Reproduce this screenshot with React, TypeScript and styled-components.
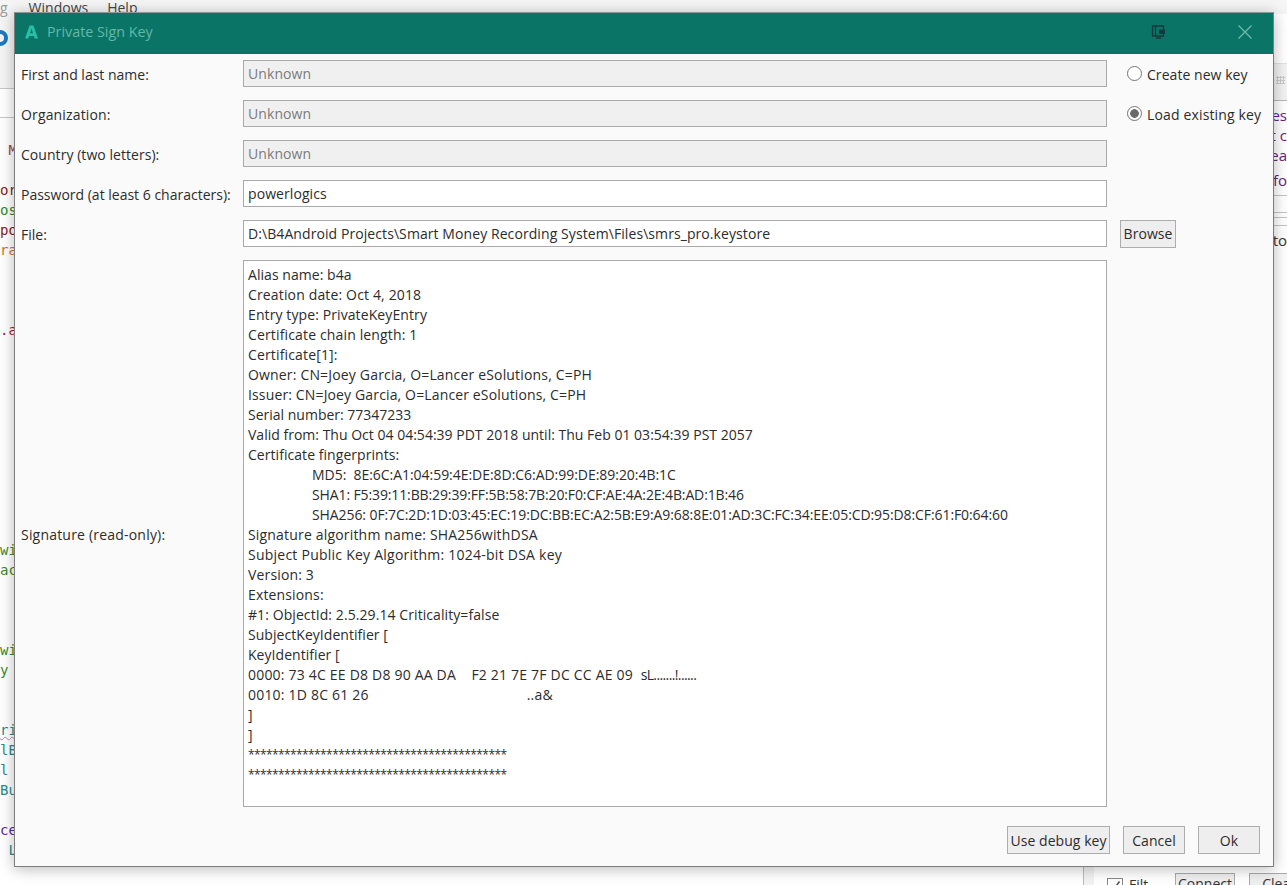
import React from "react";
import styled, { createGlobalStyle } from "styled-components";

const Global = createGlobalStyle`
  html, body { margin: 0; padding: 0; width: 1287px; height: 885px; overflow: hidden; background: #f4f4f4; }
  #root { width: 1287px; height: 885px; position: relative; overflow: hidden; }
  * { box-sizing: border-box; }
`;

const UI = `"Open Sans", "Noto Sans", "Liberation Sans", sans-serif`;
const MONO = `"DejaVu Sans Mono", "Liberation Mono", monospace`;

/* ---------- the application behind the dialog ---------- */
const Backdrop = styled.div`
  width: 1287px;
  height: 885px;
  display: grid;
  grid-template-rows: 14px 74px 30px 1fr;
  grid-template-columns: 1083px 204px;
  background: #f5f5f5;
`;
const MenuBar = styled.div`
  grid-column: 1 / 3;
  display: flex;
  align-items: center;
  gap: 19px;
  font: 14px ${UI};
  height: 14px;
`;
const MenuItem = styled.span<{ $muted?: boolean }>`
  color: ${(p) => (p.$muted ? "#999" : "#444")};
  margin-right: ${(p) => (p.$muted ? "2px" : "0")};
`;
const Toolbar = styled.div`
  grid-column: 1 / 2;
  padding-top: 16px;
`;
const ToolCircle = styled.div`
  width: 16px;
  height: 16px;
  margin-left: -8px;
  border: 4px solid #1a78c2;
  border-radius: 50%;
`;
const TabStrip = styled.div`
  grid-column: 1 / 2;
  grid-row: 3;
  background: #fff;
  border-top: 1px solid #c8c8c8;
  border-bottom: 1px solid #c8c8c8;
`;
const Code = styled.div`
  grid-column: 1 / 2;
  grid-row: 4;
  background: #fff;
  padding-top: 22px;
  overflow: hidden;
`;
const CodeLine = styled.div<{ $c: string; $wavy?: boolean }>`
  height: 20px;
  font: 14px/20px ${MONO};
  white-space: pre;
  color: ${(p) => p.$c};
  ${(p) => (p.$wavy ? "text-decoration: underline wavy #c08ac0 1px;" : "")}
`;
const SidePanel = styled.div`
  grid-column: 2 / 3;
  grid-row: 2 / 5;
  border-left: 1px solid #bdbdbd;
  display: flex;
  flex-direction: column;
  padding-left: 11px;
  background: linear-gradient(to right, #f2f2f2 10px, #fff 10px);
  min-width: 0;
  min-height: 0;
  overflow: hidden;
`;
const SideTop = styled.div`
  flex: none;
  height: 38px;
  margin: 49px 0 4px -12px;
  background: #f2f2f2;
  border-top: 1px solid #e2e2e2;
  border-bottom: 1px solid #b8b8b8;
  display: flex;
  justify-content: flex-end;
  align-items: center;
  padding: 0 2px 4px 0;
`;
const SideGrip = styled.div`
  width: 9px;
  height: 8px;
  background-image: radial-gradient(circle, #c9c9c9 1px, transparent 1.2px);
  background-size: 3px 3px;
`;
const SideText = styled.div<{ $h?: number; $c?: string; $top?: number }>`
  flex: none;
  height: ${(p) => p.$h ?? 20}px;
  margin-top: ${(p) => p.$top ?? 0}px;
  font: 15px/20px ${UI};
  color: ${(p) => p.$c ?? "#6a1b86"};
  text-align: right;
  white-space: nowrap;
`;
const SideRule = styled.div<{ $h: number }>`
  flex: none;
  height: ${(p) => p.$h}px;
  border-bottom: 1px solid #c4c4c4;
  margin-left: -12px;
`;
const SideSpacer = styled.div`
  flex: 1;
`;
const SideFooter = styled.div`
  flex: none;
  display: flex;
  align-items: flex-start;
  height: 12px;
  font: 14px/20px ${UI};
  color: #333;
  padding-left: 12px;
`;
const SideCheck = styled.svg`
  flex: none;
  margin-top: 5px;
`;
const SideLabel = styled.span`
  width: 46px;
  margin-left: 6px;
  flex: none;
  margin-top: 2px;
`;
const SideButton = styled.div`
  flex: none;
  width: 60px;
  height: 26px;
  border: 1px solid #aaa;
  background: #efefef;
  text-align: center;
  margin-right: 14px;
`;

/* ---------- the dialog ---------- */
const Dialog = styled.div`
  position: absolute;
  left: 14px;
  top: 12px;
  width: 1260px;
  height: 855px;
  display: flex;
  flex-direction: column;
  background: #fafafa;
  border: 1px solid #7d7d7d;
  border-top-color: #8a9a96;
  box-shadow: 0 2px 14px rgba(0, 0, 0, 0.28);
  font: 14px/20px ${UI};
  color: #2c2c2c;
`;
const TitleBar = styled.div`
  flex: none;
  height: 41px;
  background: #0a7566;
  display: flex;
  align-items: center;
  padding: 0 21px 4px 10px;
`;
const Title = styled.span`
  margin-left: 9px;
  flex: 1;
  color: #63b8a9;
  font-size: 14.3px;
`;
const PinIcon = styled.svg`
  margin-right: 71px;
`;
const Form = styled.div`
  display: grid;
  grid-template-columns: 222px 864px 1fr;
  grid-template-rows: repeat(5, 27px) 547px;
  row-gap: 13px;
  padding: 6px 0 0 6px;
  align-items: center;
`;
const Label = styled.label<{ $row: number; $ls?: number }>`
  grid-column: 1;
  grid-row: ${(p) => p.$row};
  white-space: nowrap;
  padding-top: 2px;
  letter-spacing: ${(p) => p.$ls ?? 0}px;
`;
const Field = styled.input<{ $row: number }>`
  grid-column: 2;
  grid-row: ${(p) => p.$row};
  width: 864px;
  height: 27px;
  padding: 0 4px;
  border: 1px solid #a9a9a9;
  outline: none;
  border-radius: 0;
  font: inherit;
  letter-spacing: 0.08px;
  color: #2c2c2c;
  background: #fff;
  &:disabled {
    background: #f0f0f0;
    color: #7b7b7b;
  }
`;
const Signature = styled.div`
  grid-column: 2;
  grid-row: 6;
  width: 864px;
  height: 547px;
  padding: 4px 4px;
  background: #fff;
  border: 1px solid #a9a9a9;
  white-space: pre;
  overflow: hidden;
`;
const SigLine = styled.div<{ $indent?: boolean; $ls?: number }>`
  height: 20px;
  padding-left: ${(p) => (p.$indent ? "64px" : "0")};
  letter-spacing: ${(p) => p.$ls ?? 0.15}px;
`;
const Stars = styled.div`
  height: 20px;
  font-size: 12px;
  letter-spacing: -0.6px;
`;
const DumpTail = styled.span`
  letter-spacing: -0.62px;
`;
const Gutter = styled.span`
  display: inline-block;
  width: 158px;
`;
const RadioRow = styled.label<{ $row: number; $ls?: number }>`
  grid-column: 3;
  grid-row: ${(p) => p.$row};
  display: flex;
  align-items: center;
  gap: 5px;
  padding: 2px 0 0 20px;
  white-space: nowrap;
  letter-spacing: ${(p) => p.$ls ?? 0.05}px;
`;
const RadioDot = styled.span<{ $on?: boolean }>`
  flex: none;
  width: 15px;
  height: 15px;
  margin-top: -2px;
  border-radius: 50%;
  border: 1px solid #767676;
  background: ${(p) => (p.$on ? "radial-gradient(circle, #6a6a6a 0 4px, #fff 4.6px)" : "#fff")};
`;
const Button = styled.button<{ $w: number }>`
  width: ${(p) => p.$w}px;
  height: 28px;
  padding: 1px 0 0;
  border: 1px solid #adadad;
  border-radius: 0;
  background: #eeeeee;
  font: inherit;
  letter-spacing: 0.05px;
  color: #2c2c2c;
`;
const BrowseCell = styled.div`
  grid-column: 3;
  grid-row: 5;
  padding-left: 13px;
`;
const Footer = styled.div`
  display: flex;
  justify-content: flex-end;
  gap: 13px;
  padding: 19px 13px 0 0;
`;

const code: [string, string, boolean?][] = [
  [" M", "#a04040"], ["", ""], ["or", "#8a2020"], ["os", "#2a8a2a"], ["po", "#8a2020"], ["ra", "#d07020"],
  ["", ""], ["", ""], ["", ""], [".a", "#a02030"],
  ...Array(10).fill(["", ""]),
  ["wi", "#3a8a2a"], ["ac", "#3a8a2a"], ["", ""], ["", ""], ["", ""],
  ["wi", "#3a8a2a"], ["y", "#3a8a2a"], ["", ""], ["", ""],
  ["ri", "#2a8a8a", true], ["lB", "#2a8a8a"], ["l", "#2a8a8a"], ["Bu", "#2a8a8a"], ["", ""],
  ["ce", "#5a2aa0"], [" L", "#2a8a8a"],
] as [string, string, boolean?][];

const sig: { t: React.ReactNode; i?: boolean; ls?: number }[] = [
  { t: "Alias name: b4a", ls: 0.05 },
  { t: "Creation date: Oct 4, 2018" },
  { t: "Entry type: PrivateKeyEntry", ls: 0.1 },
  { t: "Certificate chain length: 1" },
  { t: "Certificate[1]:" },
  { t: "Owner: CN=Joey Garcia, O=Lancer eSolutions, C=PH", ls: 0.17 },
  { t: "Issuer: CN=Joey Garcia, O=Lancer eSolutions, C=PH", ls: 0.14 },
  { t: "Serial number: 77347233", ls: 0 },
  { t: "Valid from: Thu Oct 04 04:54:39 PDT 2018 until: Thu Feb 01 03:54:39 PST 2057", ls: 0.01 },
  { t: "Certificate fingerprints:", ls: 0.05 },
  { t: "MD5:  8E:6C:A1:04:59:4E:DE:8D:C6:AD:99:DE:89:20:4B:1C", i: true, ls: -0.04 },
  { t: "SHA1: F5:39:11:BB:29:39:FF:5B:58:7B:20:F0:CF:AE:4A:2E:4B:AD:1B:46", i: true, ls: -0.12 },
  { t: "SHA256: 0F:7C:2D:1D:03:45:EC:19:DC:BB:EC:A2:5B:E9:A9:68:8E:01:AD:3C:FC:34:EE:05:CD:95:D8:CF:61:F0:64:60", i: true, ls: -0.09 },
  { t: "Signature algorithm name: SHA256withDSA", ls: 0.18 },
  { t: "Subject Public Key Algorithm: 1024-bit DSA key", ls: 0.24 },
  { t: "Version: 3" },
  { t: "Extensions:" },
  { t: "#1: ObjectId: 2.5.29.14 Criticality=false", ls: 0.08 },
  { t: "SubjectKeyIdentifier [", ls: 0.05 },
  { t: "KeyIdentifier [", ls: 0.05 },
  { t: <>0000: 73 4C EE D8 D8 90 AA DA    F2 21 7E 7F DC CC AE 09  <DumpTail>sL.......!......</DumpTail></>, ls: 0.2 },
  { t: <>0010: 1D 8C 61 26<Gutter />..a&amp;</>, ls: 0.2 },
  { t: "]" },
  { t: "]" },
];

export default function App() {
  return (
    <>
      <Global />
      <Backdrop>
        <MenuBar>
          <MenuItem $muted>g</MenuItem>
          <MenuItem>Windows</MenuItem>
          <MenuItem>Help</MenuItem>
        </MenuBar>
        <Toolbar>
          <ToolCircle />
        </Toolbar>
        <TabStrip />
        <Code>
          {code.map(([t, c, w], i) => (
            <CodeLine key={i} $c={c} $wavy={w}>{t}</CodeLine>
          ))}
        </Code>
        <SidePanel>
          <SideTop><SideGrip /></SideTop>
          <SideText>es</SideText>
          <SideText>t c</SideText>
          <SideText>ea</SideText>
          <SideText $top={5}>s fo</SideText>
          <SideRule $h={6} />
          <SideRule $h={17} />
          <SideRule $h={5} />
          <SideRule $h={8} />
          <SideText $c="#333" $top={4}>to</SideText>
          <SideSpacer />
          <SideFooter>
            <SideCheck width="16" height="16" viewBox="0 0 16 16">
              <rect x="0.5" y="0.5" width="15" height="15" fill="#fff" stroke="#888" />
              <path d="M3.5 8l3 3.5 6-8" fill="none" stroke="#444" strokeWidth="1.4" />
            </SideCheck>
            <SideLabel>Filt</SideLabel>
            <SideButton>Connect</SideButton>
            <SideButton>Clear</SideButton>
          </SideFooter>
        </SidePanel>
      </Backdrop>

      <Dialog>
        <TitleBar>
          <svg width="13" height="14" viewBox="0 0 13 14">
            <path d="M4.6 0.5h3.8L13 13.5H9.7l-.8-2.6H4.1l-.8 2.6H0zM5 8.2h3L6.5 3.4z" fill="#27bfa8" />
          </svg>
          <Title>Private Sign Key</Title>
          <PinIcon width="16" height="14" viewBox="0 0 16 14" fill="none">
            <path d="M1.5 1h11v10h-11zM4.5 1v10M5 13h5" stroke="#17383a" strokeWidth="1.3" />
            <rect x="8" y="4.5" width="6" height="4.5" fill="#17383a" />
          </PinIcon>
          <svg width="14" height="14" viewBox="0 0 14 14">
            <path d="M0.5 0.5l13 13M13.5 0.5l-13 13" stroke="#6dbcae" strokeWidth="1.2" />
          </svg>
        </TitleBar>
        <Form>
          <Label $row={1}>First and last name:</Label>
          <Field $row={1} disabled defaultValue="Unknown" />
          <RadioRow $row={1}><RadioDot />Create new key</RadioRow>
          <Label $row={2} $ls={0.15}>Organization:</Label>
          <Field $row={2} disabled defaultValue="Unknown" />
          <RadioRow $row={2} $ls={0.15}><RadioDot $on />Load existing key</RadioRow>
          <Label $row={3} $ls={0.05}>Country (two letters):</Label>
          <Field $row={3} disabled defaultValue="Unknown" />
          <Label $row={4}>Password (at least 6 characters):</Label>
          <Field $row={4} defaultValue="powerlogics" />
          <Label $row={5}>File:</Label>
          <Field $row={5} defaultValue="D:\B4Android Projects\Smart Money Recording System\Files\smrs_pro.keystore" />
          <BrowseCell><Button $w={56}>Browse</Button></BrowseCell>
          <Label $row={6} $ls={0.2}>Signature (read-only):</Label>
          <Signature>
            {sig.map((l, i) => (
              <SigLine key={i} $indent={l.i} $ls={l.ls}>{l.t}</SigLine>
            ))}
            <Stars>*******************************************</Stars>
            <Stars>*******************************************</Stars>
          </Signature>
        </Form>
        <Footer>
          <Button $w={103}>Use debug key</Button>
          <Button $w={62}>Cancel</Button>
          <Button $w={62}>Ok</Button>
        </Footer>
      </Dialog>
    </>
  );
}
